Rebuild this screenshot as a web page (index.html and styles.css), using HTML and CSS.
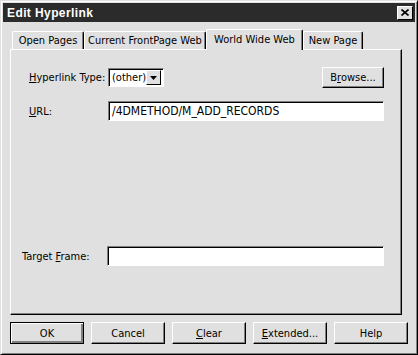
FILE: index.html
```html
<!DOCTYPE html>
<html lang="en">
<head>
    <meta charset="UTF-8">
    <title>Edit Hyperlink</title>
    <link rel="stylesheet" href="styles.css">
</head>
<body>
    <div class="window">
        <div class="titlebar">
            <span class="title">Edit Hyperlink</span>
            <span class="close"><svg width="8" height="7" viewBox="0 0 8 7"><path d="M0.5 0.5L7.5 6.5M7.5 0.5L0.5 6.5" stroke="#000" stroke-width="1.6"/></svg></span>
        </div>
        <div class="tabs">
            <span class="tab tab-open">Open Pages</span>
            <span class="tab tab-current">Current FrontPage Web</span>
            <span class="tab tab-www active">World Wide Web</span>
            <span class="tab tab-new">New Page</span>
        </div>
        <div class="panel">
            <div class="row row-type">
                <span class="label"><u>H</u>yperlink Type:</span>
                <span class="select">
                    <span class="select-value">(other)</span>
                    <span class="select-arrow"><svg width="7" height="4" viewBox="0 0 7 4"><path d="M0 0h7L3.5 4z" fill="#000"/></svg></span>
                </span>
                <span class="spacer"></span>
                <button class="btn btn-browse">B<u>r</u>owse...</button>
            </div>
            <div class="row row-url">
                <span class="label"><u>U</u>RL:</span>
                <span class="field">/4DMETHOD/M_ADD_RECORDS</span>
            </div>
            <div class="row row-target">
                <span class="label label-target">Target <u>F</u>rame:</span>
                <span class="field"></span>
            </div>
        </div>
        <div class="buttons">
            <button class="btn btn-default">OK</button>
            <button class="btn">Cancel</button>
            <button class="btn"><u>C</u>lear</button>
            <button class="btn"><u>E</u>xtended...</button>
            <button class="btn">Help</button>
        </div>
    </div>
</body>
</html>
```

FILE: styles.css
```css
body {
    margin: 0;
    padding: 0;
    background: #e0e0e0;
    font-family: "DejaVu Sans Condensed", "Liberation Sans", Arial, sans-serif;
    font-size: 11px;
    color: #000;
}
.window {
    width: 418px;
    height: 355px;
    box-sizing: border-box;
    border: 1px solid #e0e0e0;
    border-right-color: #000;
    border-bottom-color: #000;
    box-shadow: inset 1px 1px 0 #fff, inset -1px -1px 0 #808080;
    padding: 2px;
    background: #e0e0e0;
}
.titlebar {
    height: 19px;
    background: #2b2b2b;
    display: flex;
    align-items: center;
    justify-content: space-between;
    padding: 0 2px 0 4px;
}
.title {
    color: #fff;
    font-family: "Liberation Sans", Arial, sans-serif;
    font-weight: bold;
    font-size: 12px;
    letter-spacing: 0.4px;
}
.close {
    width: 16px;
    height: 14px;
    box-sizing: border-box;
    background: #e0e0e0;
    border: 1px solid #fff;
    border-right-color: #000;
    border-bottom-color: #000;
    display: flex;
    align-items: center;
    justify-content: center;
}
.tabs {
    display: flex;
    align-items: flex-end;
    margin: 6px 0 0 9px;
    height: 21px;
}
.tab {
    height: 18px;
    line-height: 18px;
    box-sizing: border-box;
    text-align: center;
    white-space: nowrap;
    border: 1px solid #fff;
    border-bottom: none;
    border-right-color: #000;
    border-radius: 2px 2px 0 0;
    box-shadow: inset -1px 0 0 #808080;
}
.tab-open {
    width: 72px;
}
.tab-current {
    width: 122px;
}
.tab-www {
    width: 97px;
}
.tab-new {
    width: 60px;
}
.tab.active {
    height: 21px;
    line-height: 20px;
    margin-bottom: -1px;
    position: relative;
    z-index: 1;
    background: #e0e0e0;
}
.panel {
    margin: 0 13px 0 7px;
    height: 266px;
    border: 1px solid #fff;
    border-right-color: #000;
    border-bottom-color: #000;
    box-shadow: inset -1px -1px 0 #808080;
    display: flex;
    flex-direction: column;
    padding: 17px 17px 0 18px;
    box-sizing: border-box;
}
.row {
    display: flex;
    align-items: center;
}
.label {
    width: 79px;
    white-space: nowrap;
}
.label-target {
    margin-left: -7px;
    width: 85px;
}
.row-url {
    margin-top: 13px;
}
.row-target {
    margin-top: 125px;
}
.select {
    display: flex;
    align-items: center;
    height: 19px;
    box-sizing: border-box;
    border: 1px solid #808080;
    border-right-color: #fff;
    border-bottom-color: #fff;
    box-shadow: inset 1px 1px 0 #000;
    background: #fff;
    padding: 0 2px 0 3px;
    width: 56px;
}
.select-value {
    flex: 1;
}
.select-arrow {
    width: 15px;
    height: 15px;
    box-sizing: border-box;
    display: flex;
    align-items: center;
    justify-content: center;
    background: #e0e0e0;
    border: 1px solid #fff;
    border-right-color: #000;
    border-bottom-color: #000;
}
.spacer {
    flex: 1;
}
.field {
    flex: 1;
    height: 20px;
    line-height: 18px;
    box-sizing: border-box;
    border: 1px solid #808080;
    border-right-color: #fff;
    border-bottom-color: #fff;
    box-shadow: inset 1px 1px 0 #000;
    background: #fff;
    padding-left: 3px;
    font-size: 12px;
}
.btn {
    font-family: inherit;
    font-size: 11px;
    background: #e0e0e0;
    border: 1px solid #fff;
    border-right-color: #000;
    border-bottom-color: #000;
    box-shadow: inset -1px -1px 0 #808080;
    padding: 0;
    height: 21px;
    color: #000;
}
.btn-browse {
    width: 62px;
}
.buttons {
    display: flex;
    gap: 7px;
    margin: 7px 0 0 7px;
}
.buttons .btn {
    width: 74px;
    height: 22px;
}
.buttons .btn-default {
    border: 1px solid #000;
    box-shadow: inset 1px 1px 0 #fff, inset -1px -1px 0 #808080, inset -2px -2px 0 #808080;
}
```
